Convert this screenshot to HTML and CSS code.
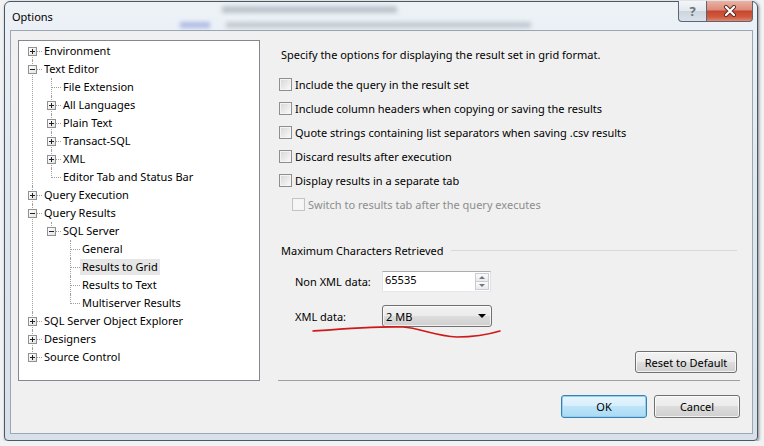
FILE: index.html
```html
<!DOCTYPE html>
<html>
<head lang="en">
    <meta charset="utf-8">
    <title>Options</title>
    <link rel="stylesheet" href="styles.css">
</head>
<body>
<div class="window">
    <div class="titlebar">
        <div class="haze haze-blue"></div>
        <div class="haze haze-a"></div>
        <div class="haze haze-b"></div>
        <span class="title">Options</span>
        <div class="caption">
            <div class="cap help">?</div>
            <div class="cap close">
                <svg width="16" height="12" viewBox="0 0 16 12">
                    <path d="M4 2 L12 10 M12 2 L4 10" stroke="#5a2a22" stroke-width="4" stroke-linecap="round"/>
                    <path d="M4 2 L12 10 M12 2 L4 10" stroke="#fff" stroke-width="2.2" stroke-linecap="round"/>
                </svg>
            </div>
        </div>
    </div>

    <div class="client">
        <div class="main">
            <div class="tree">
                <ul>
                    <li><div class="node"><span class="exp plus"></span><span class="label">Environment</span></div></li>
                    <li>
                        <div class="node"><span class="exp"></span><span class="label">Text Editor</span></div>
                        <ul>
                            <li><div class="node"><span class="label">File Extension</span></div></li>
                            <li><div class="node"><span class="exp plus"></span><span class="label">All Languages</span></div></li>
                            <li><div class="node"><span class="exp plus"></span><span class="label">Plain Text</span></div></li>
                            <li><div class="node"><span class="exp plus"></span><span class="label">Transact-SQL</span></div></li>
                            <li><div class="node"><span class="exp plus"></span><span class="label">XML</span></div></li>
                            <li><div class="node"><span class="label">Editor Tab and Status Bar</span></div></li>
                        </ul>
                    </li>
                    <li><div class="node"><span class="exp plus"></span><span class="label">Query Execution</span></div></li>
                    <li>
                        <div class="node"><span class="exp"></span><span class="label">Query Results</span></div>
                        <ul>
                            <li>
                                <div class="node"><span class="exp"></span><span class="label">SQL Server</span></div>
                                <ul>
                                    <li><div class="node"><span class="label">General</span></div></li>
                                    <li><div class="node"><span class="label sel">Results to Grid</span></div></li>
                                    <li><div class="node"><span class="label">Results to Text</span></div></li>
                                    <li><div class="node"><span class="label">Multiserver Results</span></div></li>
                                </ul>
                            </li>
                        </ul>
                    </li>
                    <li><div class="node"><span class="exp plus"></span><span class="label">SQL Server Object Explorer</span></div></li>
                    <li><div class="node"><span class="exp plus"></span><span class="label">Designers</span></div></li>
                    <li><div class="node"><span class="exp plus"></span><span class="label">Source Control</span></div></li>
                </ul>
            </div>

            <div class="pane">
                <p class="desc">Specify the options for displaying the result set in grid format.</p>
                <label class="check first"><span class="box"></span>Include the query in the result set</label>
                <label class="check"><span class="box"></span>Include column headers when copying or saving the results</label>
                <label class="check"><span class="box"></span>Quote strings containing list separators when saving .csv results</label>
                <label class="check"><span class="box"></span>Discard results after execution</label>
                <label class="check"><span class="box"></span>Display results in a separate tab</label>
                <label class="check sub disabled"><span class="box"></span>Switch to results tab after the query executes</label>

                <div class="group"><span>Maximum Characters Retrieved</span><span class="rule"></span></div>

                <div class="field nonxml">
                    <span class="field-label">Non XML data:</span>
                    <div class="spin">
                        <span class="val">65535</span>
                        <div class="spin-btns">
                            <span class="spin-btn up"></span>
                            <span class="spin-btn down"></span>
                        </div>
                    </div>
                </div>

                <div class="field xml">
                    <span class="field-label">XML data:</span>
                    <div class="combo"><span class="val">2 MB</span><span class="arrow"></span></div>
                    <svg class="scribble" width="200" height="20" viewBox="0 0 200 20">
                        <path d="M5 9 C32 7, 72 4, 95 5 C112 6, 127 14, 149 15 C167 15, 182 12, 192 9" fill="none" stroke="#d01818" stroke-width="1.6" stroke-linecap="round"/>
                    </svg>
                </div>

                <div class="reset-row"><div class="btn reset">Reset to Default</div></div>
            </div>
        </div>

        <div class="actions">
            <div class="btn ok">OK</div>
            <div class="btn">Cancel</div>
        </div>
    </div>
</div>
</body>
</html>
```

FILE: styles.css
```css
* {
    box-sizing: border-box;
}

body {
    margin: 0;
    background: #f1f2f3;
    font-family: "Noto Sans", "Open Sans", "Liberation Sans", sans-serif;
    font-size: 11px;
    color: #000;
}

.window {
    width: 754px;
    height: 440px;
    margin: 1px 0 0 4px;
    padding: 0 4px 6px 5px;
    border: 1px solid #4d5762;
    border-radius: 6px 6px 4px 4px;
    background: linear-gradient(#edf2f7, #dfe7ef 40%, #d8e0e9);
    box-shadow: 1px 1px 3px rgba(0, 0, 0, .45);
    display: flex;
    flex-direction: column;
}

/* title bar */

.titlebar {
    height: 28px;
    display: flex;
    align-items: flex-start;
    position: relative;
}

.haze {
    position: absolute;
    filter: blur(2px);
}

.haze-blue {
    left: 170px;
    top: 20px;
    width: 30px;
    height: 6px;
    background: #8797d8;
    opacity: .6;
}

.haze-a {
    left: 212px;
    top: 4px;
    width: 175px;
    height: 7px;
    background: #8e98a2;
    opacity: .5;
}

.haze-b {
    left: 216px;
    top: 20px;
    width: 305px;
    height: 6px;
    background: #9aa3ad;
    opacity: .5;
}

.title {
    position: relative;
    margin: 6px 0 0 2px;
    line-height: 18px;
}

.caption {
    margin-left: auto;
    margin-top: -1px;
    display: flex;
    position: relative;
}

.cap {
    height: 21px;
    border: 1px solid #5c6672;
    border-top: none;
    display: flex;
    align-items: center;
    justify-content: center;
}

.cap.help {
    width: 28px;
    border-right: none;
    border-radius: 0 0 0 4px;
    background: linear-gradient(#f3f6f9, #e2e8ee 50%, #ccd5df 50%, #dae1e9);
    color: #69727c;
    font-size: 13px;
    font-weight: bold;
}

.cap.close {
    width: 47px;
    border-radius: 0 0 4px 0;
    background: linear-gradient(#eab2a5, #dc8b79 45%, #c8452f 50%, #cf5a40 80%, #e08a72);
}

/* client area */

.client {
    flex: 1;
    background: #f0f0f0;
    border: 1px solid #9ba7b5;
    padding: 9px 12px 0 7px;
    display: flex;
    flex-direction: column;
}

.main {
    display: flex;
    height: 341px;
}

/* tree */

.tree {
    width: 242px;
    border: 1px solid #828790;
    background: #fff;
    padding-top: 1px;
}

.tree ul {
    list-style: none;
    margin: 0;
    padding: 0;
}

.tree ul ul {
    padding-left: 19px;
}

.tree li {
    position: relative;
}

.tree li::before {
    content: "";
    position: absolute;
    left: 13px;
    top: 0;
    bottom: 0;
    border-left: 1px dotted #a0a0a0;
}

.tree li:last-child::before {
    bottom: auto;
    height: 10px;
}

.tree > ul > li:first-child::before {
    top: 9px;
}

.node {
    position: relative;
    height: 18px;
    padding-left: 23px;
    display: flex;
    align-items: center;
}

.node::after {
    content: "";
    position: absolute;
    left: 14px;
    top: 9px;
    width: 9px;
    border-top: 1px dotted #a0a0a0;
}

.label {
    padding: 0 2px;
    line-height: 16px;
    white-space: nowrap;
}

.label.sel {
    background: #e6e6e6;
}

.exp {
    position: absolute;
    left: 9px;
    top: 5px;
    width: 9px;
    height: 9px;
    border: 1px solid #919191;
    background: linear-gradient(135deg, #fff, #e2e2e2);
    z-index: 1;
}

.exp::before {
    content: "";
    position: absolute;
    left: 1px;
    top: 3px;
    width: 5px;
    height: 1px;
    background: #222;
}

.exp.plus::after {
    content: "";
    position: absolute;
    left: 3px;
    top: 1px;
    width: 1px;
    height: 5px;
    background: #222;
}

/* right pane */

.pane {
    flex: 1;
    margin-left: 18px;
    border-bottom: 1px solid #a0a0a0;
    display: flex;
    flex-direction: column;
}

.desc {
    margin: 6px 0 0 3px;
    line-height: 18px;
}

.check {
    display: flex;
    align-items: center;
    height: 24px;
    margin-left: 1px;
}

.check.first {
    margin-top: 8px;
}

.box {
    width: 13px;
    height: 13px;
    margin-right: 3px;
    border: 1px solid #8e8f8f;
    background: linear-gradient(135deg, #d6d6d6, #fbfbfb);
    box-shadow: inset 0 0 0 1px #f4f4f4;
}

.check.sub {
    margin-left: 14px;
}

.check.disabled {
    color: #8d8d8d;
}

.check.disabled .box {
    border-color: #c4c4c4;
    background: #f6f6f6;
}

.group {
    display: flex;
    align-items: center;
    height: 18px;
    margin: 25px 0 0 3px;
}

.group .rule {
    flex: 1;
    margin: 0 3px 0 7px;
    border-top: 1px solid #d5d9dd;
}

.field {
    display: flex;
    align-items: center;
    margin-left: 17px;
    position: relative;
}

.field-label {
    width: 87px;
}

.field.nonxml {
    margin-top: 12px;
}

.field.xml {
    margin-top: 13px;
}

.spin {
    width: 109px;
    height: 21px;
    padding: 0 1px 0 2px;
    border: 1px solid #abadb3;
    border-color: #abadb3 #dbdfe6 #e3e9ef #e2e3ea;
    background: #fff;
    display: flex;
}

.spin .val {
    flex: 1;
    line-height: 15px;
}

.spin-btns {
    width: 14px;
    margin: 1px 0;
    display: flex;
    flex-direction: column;
}

.spin-btn {
    flex: 1;
    border: 1px solid #c9cdd2;
    background: linear-gradient(#fbfbfb, #eaeaea);
    display: flex;
    align-items: center;
    justify-content: center;
}

.spin-btn.down {
    border-top: none;
}

.spin-btn::after {
    content: "";
    border-left: 3px solid transparent;
    border-right: 3px solid transparent;
}

.spin-btn.up::after {
    border-bottom: 3px solid #6b7885;
}

.spin-btn.down::after {
    border-top: 3px solid #6b7885;
}

.combo {
    width: 110px;
    height: 22px;
    padding: 0 5px 0 3px;
    border: 1px solid #707070;
    border-radius: 3px;
    background: linear-gradient(#f2f2f2, #ebebeb 50%, #dddddd 50%, #cfcfcf);
    box-shadow: inset 0 0 0 1px rgba(255, 255, 255, .7);
    display: flex;
    align-items: center;
}

.combo .val {
    flex: 1;
}

.combo .arrow {
    border-left: 4px solid transparent;
    border-right: 4px solid transparent;
    border-top: 4px solid #000;
}

.scribble {
    position: absolute;
    left: 13px;
    top: 17px;
}

.reset-row {
    display: flex;
    justify-content: flex-end;
    margin: 24px 3px 0 0;
}

/* buttons */

.btn {
    width: 86px;
    height: 23px;
    border: 1px solid #707070;
    border-radius: 3px;
    background: linear-gradient(#f2f2f2, #ebebeb 50%, #dddddd 50%, #cfcfcf);
    box-shadow: inset 0 0 0 1px rgba(255, 255, 255, .75);
    display: flex;
    align-items: center;
    justify-content: center;
}

.btn.reset {
    width: 102px;
    height: 22px;
}

.btn.ok {
    border-color: #3c7fb1;
    background: linear-gradient(#e6f5fd, #d6eefb 50%, #bde4f8 50%, #a9dbf4);
    box-shadow: inset 0 0 0 1px #8fd2f0;
}

.actions {
    display: flex;
    justify-content: flex-end;
    gap: 7px;
    margin-top: 14px;
}
```
